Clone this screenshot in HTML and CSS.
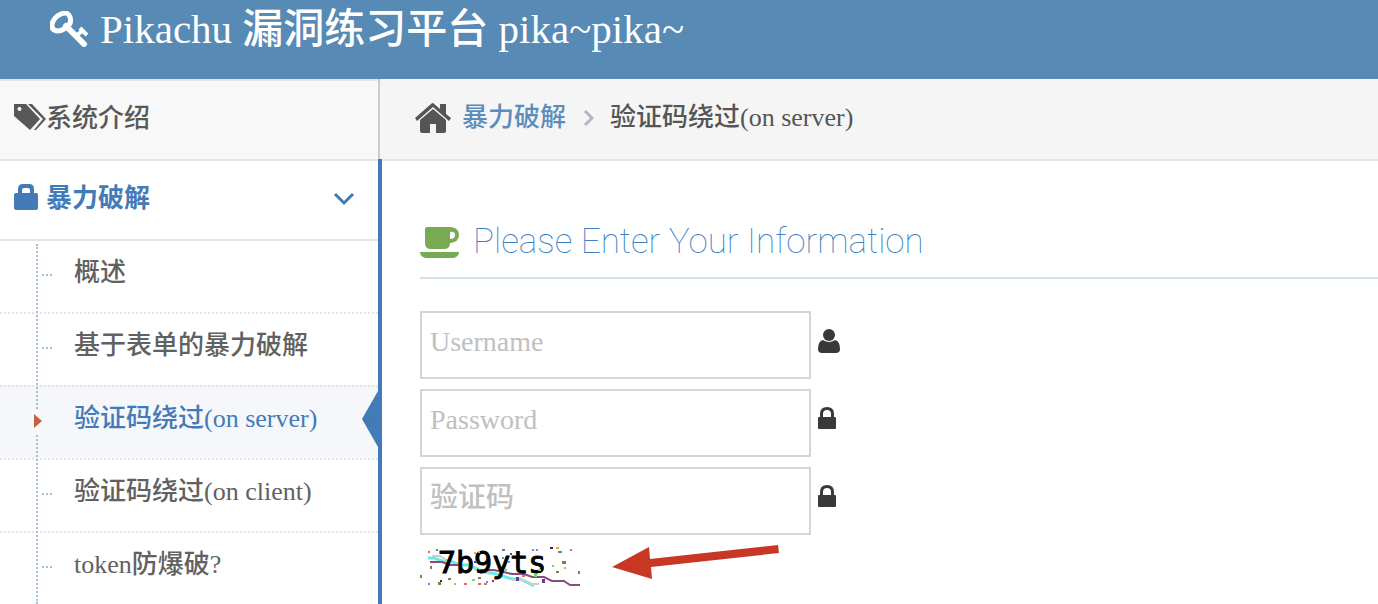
FILE: index.html
```
<!DOCTYPE html>
<html lang="zh-CN">
<head>
  <meta charset="UTF-8">
  <meta name="viewport" content="width=device-width, initial-scale=1.0">
  <title>Pikachu 漏洞练习平台 pika~pika~</title>
  <link rel="stylesheet" href="styles.css">
</head>
<body>
  <header class="navbar">
    <a class="brand" href="#">
      <svg class="icon-key" viewBox="0 0 38 36" aria-hidden="true">
        <path class="bow" d="M11 3q7-3 9 3 2 6-3 10t-10 4q-6-1-5-7 2-7 9-10z"/>
        <path class="shaft" d="M16 15l18 18"/>
        <path class="teeth" d="M26 25l6-5M30 17l7 7"/>
      </svg>
      <span>Pikachu 漏洞练习平台 pika~pika~</span>
    </a>
  </header>

  <div class="main-container">
    <nav class="sidebar">
      <ul class="nav-list">
        <li class="nav-item">
          <a class="nav-link" href="#">
            <svg class="icon-tags" viewBox="0 0 32 26" aria-hidden="true">
              <path fill-rule="evenodd" d="M0 0h12l14 15-10 11L0 12zM5 3a2 2 0 1 0 1 0z"/>
              <path d="M14 0h4l14 15-10 11h-2l9-11z"/>
            </svg>
            <span>系统介绍</span>
          </a>
        </li>
        <li class="nav-item open">
          <a class="nav-link" href="#">
            <svg class="icon-bag" viewBox="0 0 24 26" aria-hidden="true">
              <path fill-rule="evenodd" d="M4 9V5q0-5 5-5h6q5 0 5 5v4h2q2 0 2 2v13q0 2-2 2H2q-2 0-2-2V11q0-2 2-2zM8 9h8V6q0-2-2-2h-4q-2 0-2 2z"/>
            </svg>
            <span>暴力破解</span>
            <svg class="icon-down" viewBox="0 0 22 14" aria-hidden="true"><path d="M2 2l9 9 9-9"/></svg>
          </a>
          <ul class="submenu">
            <li><a href="#">概述</a></li>
            <li><a href="#">基于表单的暴力破解</a></li>
            <li class="active">
              <a href="#">验证码绕过(on server)</a>
              <svg class="caret" viewBox="0 0 8 14" aria-hidden="true"><path d="M0 0l8 7-8 7z"/></svg>
              <svg class="marker" viewBox="0 0 16 56" aria-hidden="true"><path d="M16 0v56L0 28z"/></svg>
            </li>
            <li><a href="#">验证码绕过(on client)</a></li>
            <li><a href="#">token防爆破?</a></li>
          </ul>
        </li>
      </ul>
    </nav>

    <main class="content">
      <div class="breadcrumbs">
        <svg class="icon-home" viewBox="0 0 36 30" aria-hidden="true">
          <path d="M18 6l13 11v11q0 2-2 2h-8v-9h-6v9H7q-2 0-2-2V17z"/>
          <path d="M18 0l7 6V1h6v10l5 4-2 3L18 4 2 18l-2-3L16 1q1-1 2-1z"/>
        </svg>
        <a href="#">暴力破解</a>
        <svg class="icon-right" viewBox="0 0 10 16" aria-hidden="true"><path d="M1 1l7 7-7 7"/></svg>
        <span>验证码绕过(on server)</span>
      </div>

      <div class="page-content">
        <h4 class="header">
          <svg class="icon-coffee" viewBox="0 0 39 31" aria-hidden="true">
            <path fill-rule="evenodd" d="M7 0h24q8 1 8 8t-9 8q0 6-6 6H11q-6 0-6-6V2q0-2 2-2zM30 5v7q5 0 5-4t-5-3z"/>
            <path d="M0 25h39q0 5-6 6H6q-6-1-6-6z"/>
          </svg>
          <span>Please Enter Your Information</span>
        </h4>

        <form class="login-form">
          <label class="field">
            <input type="text" name="username" placeholder="Username" aria-label="Username">
            <svg class="icon-user" viewBox="0 0 22 24" aria-hidden="true">
              <ellipse cx="11" cy="6" rx="6" ry="6"/>
              <path d="M5 11q6 4 12 0 5 1 5 9 0 4-4 4H4q-4 0-4-4 0-8 5-9z"/>
            </svg>
          </label>
          <label class="field">
            <input type="password" name="password" placeholder="Password" aria-label="Password">
            <svg class="icon-lock" viewBox="0 0 18 22" aria-hidden="true">
              <path fill-rule="evenodd" d="M2 10V7q0-7 7-7t7 7v3h1q1 0 1 1v10q0 1-1 1H1q-1 0-1-1V11q0-1 1-1zM5 10h8V7q0-4-4-4T5 7z"/>
            </svg>
          </label>
          <label class="field">
            <input type="text" name="vcode" placeholder="验证码" aria-label="验证码">
            <svg class="icon-lock" viewBox="0 0 18 22" aria-hidden="true">
              <path fill-rule="evenodd" d="M2 10V7q0-7 7-7t7 7v3h1q1 0 1 1v10q0 1-1 1H1q-1 0-1-1V11q0-1 1-1zM5 10h8V7q0-4-4-4T5 7z"/>
            </svg>
          </label>

          <div class="captcha-row">
            <svg class="captcha" viewBox="0 0 160 40" role="img" aria-label="7b9yts">
              <g fill="none" stroke-width="2">
                <path stroke="#66eee4" stroke-width="3" d="M8 11h6l8 3h8l10 4h8l14 6 14 3 16 5h8l14 7"/>
                <path stroke="#c8d0c8" d="M12 9h8l8 5M54 22l16 5M92 33h12l8 4h7"/>
                <path stroke="#8a4a80" d="M10 15h12l8 3h8M60 23h14l18 4h12l8 3h12l8 4h12l6 4h10"/>
              </g>
              <text x="18" y="26">7b9yts</text>
              <g fill="#e06a70"><path d="M8 4h2v2H8zM44 36h3v2h-3zM58 36h3v2h-3zM64 36h3v2h-3zM150 2h2v2h-2zM102 28h3v2h-3z"/></g>
              <g fill="#6a8aee"><path d="M8 36h2v2H8zM82 10h2v2h-2zM112 2h2v2h-2zM116 2h2v2h-2zM88 14h2v2h-2zM66 34h2v2h-2z"/></g>
              <g fill="#8a7a50"><path d="M0 28h2v3H0zM18 35h3v3h-3zM136 24h3v2h-3zM142 14h4v3h-4zM158 24h2v3h-2zM28 31h3v2h-3zM58 30h3v2h-3zM10 19h2v3h-2z"/></g>
              <g fill="#71d96d"><path d="M52 32h3v2h-3zM84 22h3v2h-3zM114 27h3v3h-3zM132 18h2v2h-2zM34 36h2v2h-2zM118 22h3v2h-3z"/></g>
              <g fill="#6c3a9a"><path d="M96 30h3v4h-3zM122 32h3v4h-3zM90 6h2v2h-2zM54 14h3v2h-3zM72 33h2v2h-2z"/></g>
              <g fill="#4f8b95"><path d="M16 2h2v2h-2zM82 2h3v2h-3zM138 4h4v2h-4z"/></g>
              <g fill="#342b48"><path d="M130 0h3v2h-3zM20 33h2v2h-2z"/></g>
              <g fill="#efa53c"><path d="M136 0h3v2h-3zM58 4h2v2h-2zM144 20h2v2h-2zM54 5h2v2h-2z"/></g>
            </svg>
            <svg class="arrow" viewBox="0 0 167 34" aria-hidden="true">
              <path d="M0 22L37 2l1 12L166 0l1 8L39 22l1 12z"/>
            </svg>
          </div>
        </form>
      </div>
    </main>
  </div>
</body>
</html>
```
FILE: styles.css
```
* {
  box-sizing: border-box;
}

body {
  margin: 0;
  font-family: "Liberation Serif", "Noto Sans CJK SC", serif;
  font-size: 26px;
  font-weight: 500;
  line-height: 38px;
  color: #555;
  background-color: #fff;
}

ul {
  list-style: none;
  margin: 0;
  padding: 0;
}

a {
  text-decoration: none;
}

svg {
  flex: none;
  fill: currentColor;
}

.navbar {
  height: 79px;
  padding: 0 50px;
  background-color: #578ab5;
}

.brand {
  display: inline-flex;
  align-items: center;
  gap: 12px;
  height: 58px;
  color: #fff;
  font-size: 41px;
  line-height: 58px;
  white-space: nowrap;
}

.icon-key {
  width: 38px;
  height: 36px;
}

.icon-key path {
  fill: none;
  stroke: currentColor;
}

.icon-key .bow {
  stroke-width: 5;
}

.icon-key .shaft {
  stroke-width: 6;
  stroke-linecap: round;
}

.icon-key .teeth {
  stroke-width: 4;
}

.main-container {
  display: flex;
  min-height: calc(100vh - 79px);
}

/* sidebar */
.sidebar {
  flex: none;
  width: 380px;
  border-right: 2px solid #ccc;
}

.nav-item {
  position: relative;
  border-top: 2px solid #e5e5e5;
}

.nav-link {
  display: flex;
  align-items: center;
  height: 78px;
  padding: 0 23px 2px 14px;
  color: #585858;
  background-color: #f8f8f8;
}

.icon-tags {
  width: 32px;
  height: 26px;
  margin-bottom: 4px;
}

.open .nav-link {
  gap: 8px;
  color: #437bb8;
  background-color: #fff;
  font-weight: bold;
}

.icon-bag {
  width: 24px;
  height: 26px;
  margin-bottom: 4px;
}

.icon-down {
  width: 22px;
  height: 14px;
  margin-left: auto;
}

.icon-down path,
.icon-right path {
  fill: none;
  stroke: currentColor;
  stroke-width: 3;
}

.open::after {
  content: "";
  position: absolute;
  top: -2px;
  right: -4px;
  bottom: 0;
  width: 4px;
  background-color: #437bb8;
}

.submenu {
  position: relative;
  border-top: 2px solid #e5e5e5;
}

.submenu::before {
  content: "";
  position: absolute;
  z-index: 1;
  top: 3px;
  bottom: 0;
  left: 36px;
  border-left: 2px dotted #a8bfda;
}

.submenu li {
  position: relative;
}

.submenu li + li {
  border-top: 2px dotted #e5e5e5;
}

.submenu li::before {
  content: "";
  position: absolute;
  top: 33px;
  left: 42px;
  width: 10px;
  border-top: 2px dotted #a8bfda;
}

.submenu a {
  display: block;
  padding: 13px 0 20px 74px;
  color: #616161;
}

.submenu .active {
  background-color: #f5f7fb;
}

.submenu .active::before {
  display: none;
}

.submenu .active a {
  color: #437bb8;
}

.caret {
  position: absolute;
  z-index: 2;
  top: 22px;
  left: 34px;
  width: 8px;
  height: 24px;
  color: #c4633f;
  background-color: #f5f7fb;
}

.marker {
  position: absolute;
  top: 4px;
  right: 0;
  width: 16px;
  height: 56px;
  color: #437bb8;
}

/* content */
.content {
  flex: 1;
  min-width: 0;
}

.breadcrumbs {
  display: flex;
  align-items: center;
  height: 82px;
  padding: 0 35px 2px;
  background-color: #f5f5f5;
  border-bottom: 2px solid #e5e5e5;
}

.breadcrumbs a {
  margin-left: 11px;
  color: #5a8dbb;
}

.icon-home {
  width: 36px;
  height: 30px;
}

.icon-right {
  width: 10px;
  height: 16px;
  margin: 0 16px 0 18px;
  color: #b2b6bf;
}

.page-content {
  padding: 54px 0 0 40px;
}

.header {
  display: flex;
  align-items: center;
  gap: 14px;
  height: 64px;
  margin: 0 0 32px;
  padding-bottom: 8px;
  border-bottom: 2px solid #d5e3ef;
  color: #3a7fc4;
  font-family: Roboto, sans-serif;
  font-size: 35px;
  font-weight: 100;
}

.icon-coffee {
  width: 39px;
  height: 31px;
  color: #78a953;
}

.login-form {
  display: flex;
  flex-direction: column;
  gap: 10px;
}

.field {
  display: flex;
  align-items: center;
  gap: 7px;
  color: #393939;
}

.field input {
  width: 391px;
  height: 68px;
  padding: 6px 8px 12px;
  border: 2px solid #d5d5d5;
  border-radius: 0;
  font-family: inherit;
  font-size: 28px;
  font-weight: inherit;
  color: #858585;
}

.field input::placeholder {
  color: #c0c0c0;
}

.icon-user {
  width: 22px;
  height: 24px;
  margin-bottom: 8px;
}

.icon-lock {
  width: 18px;
  height: 22px;
  margin-bottom: 10px;
}

.captcha-row {
  display: flex;
  gap: 32px;
}

.captcha {
  width: 160px;
  height: 40px;
  margin-top: 2px;
  overflow: visible;
}

.captcha text {
  fill: #000;
  stroke: #000;
  stroke-width: 1px;
  font-family: "DejaVu Sans Mono", monospace;
  font-size: 30px;
  font-weight: normal;
}

.arrow {
  width: 167px;
  height: 34px;
  color: #c83624;
}
```
